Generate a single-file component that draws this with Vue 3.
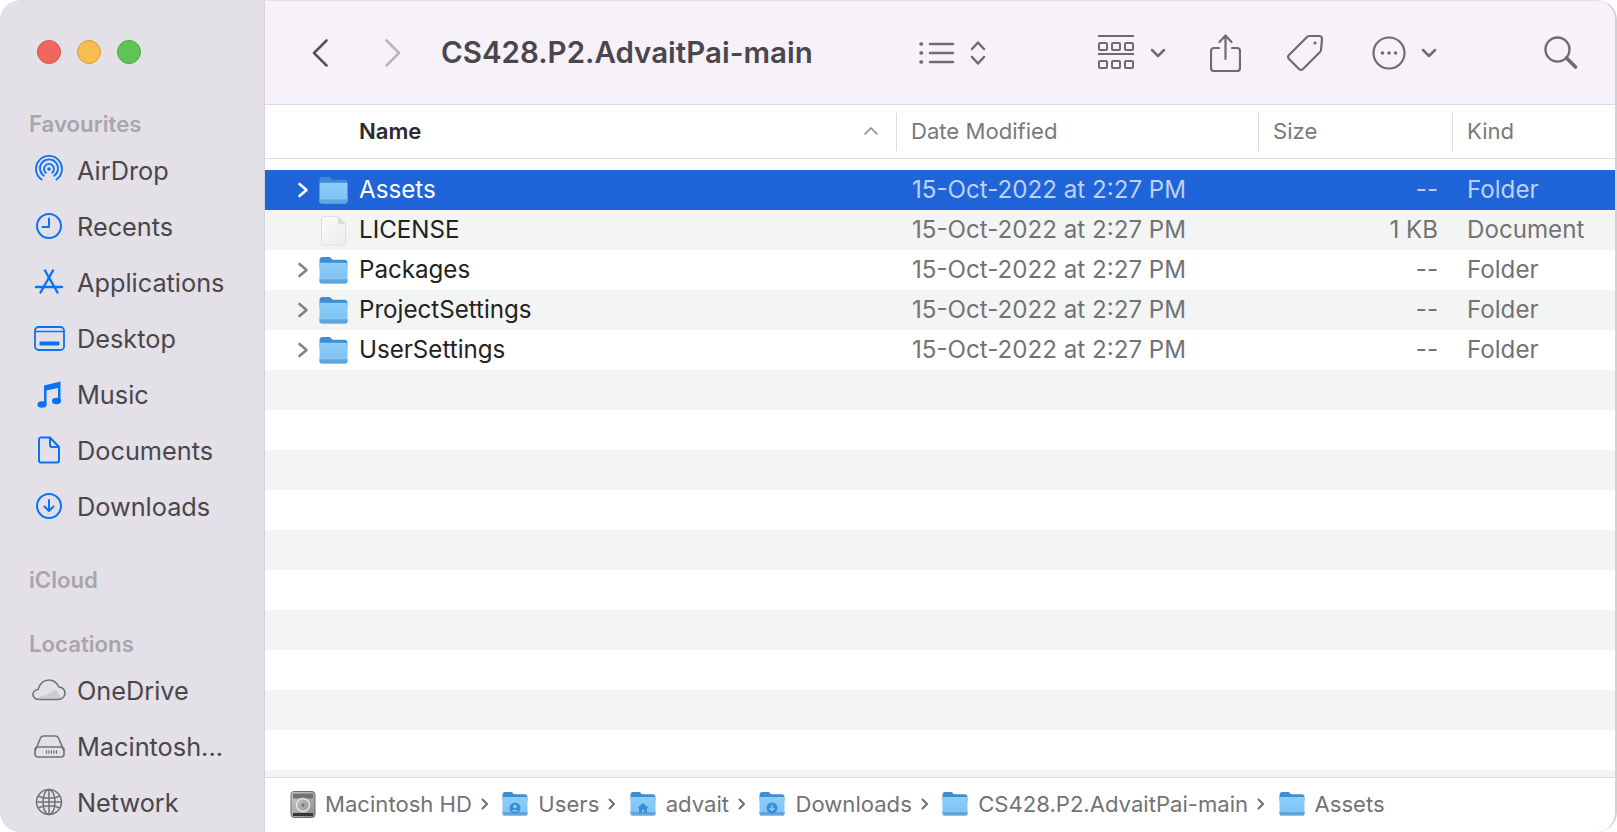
<script setup>
const favourites = [
  { name: 'AirDrop', icon: 'airdrop' },
  { name: 'Recents', icon: 'recents' },
  { name: 'Applications', icon: 'apps' },
  { name: 'Desktop', icon: 'desktop' },
  { name: 'Music', icon: 'music' },
  { name: 'Documents', icon: 'documents' },
  { name: 'Downloads', icon: 'downloads' }
]

const locations = [
  { name: 'OneDrive', icon: 'cloud' },
  { name: 'Macintosh...', icon: 'drive' },
  { name: 'Network', icon: 'globe' }
]

const date = '15-Oct-2022 at 2:27 PM'

const files = [
  { name: 'Assets', folder: true, size: '--', kind: 'Folder' },
  { name: 'LICENSE', folder: false, size: '1 KB', kind: 'Document' },
  { name: 'Packages', folder: true, size: '--', kind: 'Folder' },
  { name: 'ProjectSettings', folder: true, size: '--', kind: 'Folder' },
  { name: 'UserSettings', folder: true, size: '--', kind: 'Folder' }
]

// empty stripes under the files
const blankRows = Array.from({ length: 11 }, (_, i) => i + 5)

const crumbs = [
  { name: 'Users', badge: 'user' },
  { name: 'advait', badge: 'home' },
  { name: 'Downloads', badge: 'down' },
  { name: 'CS428.P2.AdvaitPai-main' },
  { name: 'Assets' }
]
</script>

<template>
  <div class="window">
    <svg class="defs" width="0" height="0">
      <defs>
        <linearGradient id="folderBody" x1="0" y1="0" x2="0" y2="1">
          <stop offset="0" stop-color="#8ccefa" />
          <stop offset="1" stop-color="#7cc2f4" />
        </linearGradient>
        <linearGradient id="paper" x1="0" y1="0" x2="1" y2="1">
          <stop offset="0" stop-color="#fbfbfb" />
          <stop offset="1" stop-color="#ececec" />
        </linearGradient>
        <linearGradient id="metal" x1="0" y1="0" x2="1" y2="1">
          <stop offset="0" stop-color="#c9cbcc" />
          <stop offset="1" stop-color="#8b8e90" />
        </linearGradient>
        <symbol id="folder" viewBox="0 0 28 26">
          <path d="M0.500 3a3 3 0 0 1 3-3h6.500c1.500 0 2 2.500 3.500 2.500h11a3 3 0 0 1 3 3V10H0.500z" fill="#3d8dd2" />
          <path d="M0.500 6.500a1 1 0 0 1 1-1h25a1 1 0 0 1 1 1v17a2 2 0 0 1-2 2h-23a2 2 0 0 1-2-2z" fill="url(#folderBody)" />
          <path d="M0.500 21h27v2.500a2 2 0 0 1-2 2h-23a2 2 0 0 1-2-2z" fill="#5ea6dd" />
          <path d="M0.500 21h27" stroke="#94cdf5" stroke-width="0.800" />
        </symbol>
      </defs>
    </svg>

    <aside class="sidebar">
      <div class="lights">
        <span class="light red"></span>
        <span class="light yellow"></span>
        <span class="light green"></span>
      </div>

      <div class="section-title first">Favourites</div>
      <div v-for="item in favourites" :key="item.name" class="side-item">
        <span class="side-icon blue">
          <svg v-if="item.icon === 'airdrop'" width="30" height="30" viewBox="0 0 30 30" fill="none" stroke="currentColor" stroke-width="1.800" stroke-linecap="round">
            <path d="M7.500 24.500a13 13 0 1 1 15 0" />
            <path d="M9.800 20.800a9 9 0 1 1 10.400 0" />
            <path d="M11.800 17.800a5 5 0 1 1 6.400 0" />
            <circle cx="15" cy="14" r="1.800" fill="currentColor" stroke="none" />
          </svg>
          <svg v-else-if="item.icon === 'recents'" width="28" height="28" viewBox="0 0 28 28" fill="none" stroke="currentColor" stroke-width="2" stroke-linecap="round" stroke-linejoin="round">
            <circle cx="14" cy="14" r="12" />
            <path d="M14 6.500V15H7.500" />
          </svg>
          <svg v-else-if="item.icon === 'apps'" width="30" height="26" viewBox="0 0 30 26" fill="none" stroke="currentColor" stroke-width="2.400" stroke-linecap="round">
            <path d="M11 1.500L23.500 23.500" />
            <path d="M19 1.500L6.500 23.500" />
            <path d="M2 18h26" />
          </svg>
          <svg v-else-if="item.icon === 'desktop'" width="31" height="25" viewBox="0 0 31 25" fill="none" stroke="currentColor">
            <rect x="1" y="1" width="29" height="23" rx="3.500" stroke-width="1.800" />
            <path d="M1 5.500h29" stroke-width="1.500" />
            <rect x="5.500" y="15.500" width="20" height="4" rx="1" fill="currentColor" stroke="none" />
          </svg>
          <svg v-else-if="item.icon === 'music'" width="25" height="28" viewBox="0 0 25 28" fill="currentColor">
            <path d="M7 5.500L23.500 1.500V21h-2.500V8L9.500 10.500V25H7z" />
            <ellipse cx="5" cy="24.500" rx="4.500" ry="3.300" />
            <ellipse cx="19.500" cy="21" rx="4.500" ry="3.300" />
          </svg>
          <svg v-else-if="item.icon === 'documents'" width="24" height="28" viewBox="0 0 24 28" fill="none" stroke="currentColor" stroke-width="2" stroke-linejoin="round">
            <path d="M4 1.500h9l9 9.500v13.500a2 2 0 0 1-2 2H4a2 2 0 0 1-2-2v-21a2 2 0 0 1 2-2z" />
            <path d="M13 1.500V9a2 2 0 0 0 2 2h7" />
          </svg>
          <svg v-else width="28" height="28" viewBox="0 0 28 28" fill="none" stroke="currentColor" stroke-width="2" stroke-linecap="round" stroke-linejoin="round">
            <circle cx="14" cy="14" r="12" />
            <path d="M14 8v11M9.500 14.500L14 19l4.500-4.500" />
          </svg>
        </span>
        <span>{{ item.name }}</span>
      </div>

      <div class="section-title icloud">iCloud</div>
      <div class="section-title locations">Locations</div>
      <div v-for="item in locations" :key="item.name" class="side-item">
        <span class="side-icon grey">
          <svg v-if="item.icon === 'cloud'" width="34" height="22" viewBox="0 0 34 22" fill="none" stroke="currentColor" stroke-width="1.600">
            <path d="M4 19.500c6-2 14-6 20-9l6 9.500z" fill="#cfccd1" stroke="none" />
            <path d="M8 20.500c-9 0-9-9-2-10C8 4 12 1 17 1c5 0 8 3 10 7 8 0 8 12.500-1 12.500z" />
          </svg>
          <svg v-else-if="item.icon === 'drive'" width="31" height="23" viewBox="0 0 31 23" fill="none" stroke="currentColor" stroke-width="1.600" stroke-linejoin="round">
            <path d="M1 16l5.500-13a3 3 0 0 1 2.800-2h12.400a3 3 0 0 1 2.800 2L30 16" />
            <rect x="1" y="12" width="29" height="10" rx="3" />
            <path d="M12.500 15.200v3.500M15 15.200v3.500M17.500 15.200v3.500M20 15.200v3.500M22.500 15.200v3.500" stroke-width="1.200" />
          </svg>
          <svg v-else width="28" height="28" viewBox="0 0 28 28" fill="none" stroke="currentColor" stroke-width="1.500">
            <circle cx="14" cy="14" r="12.500" />
            <ellipse cx="14" cy="14" rx="6" ry="12.500" />
            <path d="M14 1.500v25M3 8c6 3 16 3 22 0M3 20c6-3 16-3 22 0M1.500 14h25" />
          </svg>
        </span>
        <span>{{ item.name }}</span>
      </div>
    </aside>

    <main class="content">
      <header class="toolbar">
        <svg class="nav-back" width="18" height="30" viewBox="0 0 18 30" fill="none" stroke="#565358" stroke-width="2.600" stroke-linecap="round" stroke-linejoin="round">
          <path d="M15.500 2.500L3 15l12.500 12.500" />
        </svg>
        <svg class="nav-forward" width="18" height="30" viewBox="0 0 18 30" fill="none" stroke="#b9b6bb" stroke-width="2.600" stroke-linecap="round" stroke-linejoin="round">
          <path d="M2.500 2.500L15 15 2.500 27.500" />
        </svg>
        <div class="title">CS428.P2.AdvaitPai-main</div>

        <svg class="tool list" width="36" height="24" viewBox="0 0 36 24" fill="none" stroke="#6f6b71" stroke-width="2.500" stroke-linecap="round">
          <path d="M11 3h23M11 12h23M11 21h23" />
          <path d="M2 3h.5M2 12h.5M2 21h.5" stroke-width="3.500" />
        </svg>
        <svg class="tool updown" width="16" height="26" viewBox="0 0 16 26" fill="none" stroke="#6f6b71" stroke-width="2.500" stroke-linecap="round" stroke-linejoin="round">
          <path d="M2 9l6-6.500L14 9M2 17l6 6.500L14 17" />
        </svg>
        <svg class="tool grid" width="36" height="35" viewBox="0 0 36 35" fill="none" stroke="#6f6b71" stroke-width="2">
          <path d="M0 1h36M0 19h36" />
          <rect x="1" y="8" width="8" height="7" rx="1" />
          <rect x="14" y="8" width="8" height="7" rx="1" />
          <rect x="27" y="8" width="8" height="7" rx="1" />
          <rect x="1" y="26" width="8" height="7" rx="1" />
          <rect x="14" y="26" width="8" height="7" rx="1" />
          <rect x="27" y="26" width="8" height="7" rx="1" />
        </svg>
        <svg class="tool caret-grid" width="16" height="10" viewBox="0 0 16 10" fill="none" stroke="#6f6b71" stroke-width="2.500" stroke-linecap="round" stroke-linejoin="round">
          <path d="M2 2l6 6 6-6" />
        </svg>
        <svg class="tool share" width="31" height="38" viewBox="0 0 31 38" fill="none" stroke="#6f6b71" stroke-width="2.200" stroke-linecap="round" stroke-linejoin="round">
          <path d="M9 14H4a3 3 0 0 0-3 3v17a3 3 0 0 0 3 3h23a3 3 0 0 0 3-3V17a3 3 0 0 0-3-3h-5" />
          <path d="M15.500 25V2M9.500 8l6-6.500 6 6.500" />
        </svg>
        <svg class="tool tag" width="38" height="38" viewBox="0 0 38 38" fill="none" stroke="#6f6b71" stroke-width="2.200" stroke-linejoin="round">
          <path d="M23 2h10a3 3 0 0 1 3 3l-1 11a3 3 0 0 1-1 2L17 35a3 3 0 0 1-4 0L3 25a3 3 0 0 1 0-4L21 3a3 3 0 0 1 2-1z" />
          <circle cx="29" cy="9" r="1.600" fill="#6f6b71" stroke="none" />
        </svg>
        <svg class="tool more" width="34" height="34" viewBox="0 0 34 34" fill="none" stroke="#6f6b71" stroke-width="2.200">
          <circle cx="17" cy="17" r="15.500" />
          <g fill="#6f6b71" stroke="none">
            <circle cx="10.500" cy="17" r="1.800" />
            <circle cx="17" cy="17" r="1.800" />
            <circle cx="23.500" cy="17" r="1.800" />
          </g>
        </svg>
        <svg class="tool caret-more" width="16" height="10" viewBox="0 0 16 10" fill="none" stroke="#6f6b71" stroke-width="2.500" stroke-linecap="round" stroke-linejoin="round">
          <path d="M2 2l6 6 6-6" />
        </svg>
        <svg class="tool search" width="34" height="33" viewBox="0 0 34 33" fill="none" stroke="#6f6b71" stroke-linecap="round">
          <circle cx="13.500" cy="13.500" r="12" stroke-width="2.400" />
          <path d="M22.500 22l9 9" stroke-width="3.600" />
        </svg>
      </header>

      <div class="columns">
        <div class="col col-name">
          <span class="name-label">Name</span>
          <svg class="sort" width="16" height="10" viewBox="0 0 16 10" fill="none" stroke="#8a888b" stroke-width="1.600" stroke-linecap="round" stroke-linejoin="round">
            <path d="M2 8l6-6 6 6" />
          </svg>
        </div>
        <div class="col col-date">Date Modified</div>
        <div class="col col-size">Size</div>
        <div class="col col-kind">Kind</div>
      </div>

      <div class="rows">
        <div
          v-for="(file, i) in files"
          :key="file.name"
          class="row"
          :class="{ selected: i === 0, odd: i % 2 === 1 }"
        >
          <div class="cell-name">
            <span class="arrow">
              <svg v-if="file.folder" width="12" height="16" viewBox="0 0 12 16" fill="none" stroke="currentColor" stroke-width="2.600" stroke-linecap="round" stroke-linejoin="round">
                <path d="M2.500 2l7 6-7 6" />
              </svg>
            </span>
            <svg v-if="file.folder" class="file-icon" width="29" height="27"><use href="#folder" /></svg>
            <svg v-else class="file-icon" width="29" height="31" viewBox="0 0 29 31">
              <path d="M3.500 1.500h15.500l7.500 7.500v19.500a1.500 1.500 0 0 1-1.500 1.500H4a1.500 1.500 0 0 1-1.500-1.500V2.500z" fill="url(#paper)" stroke="#dedede" />
              <path d="M19 1.500V9h7.500z" fill="#dcdcdc" />
            </svg>
            <span class="name-text">{{ file.name }}</span>
          </div>
          <div class="cell-date">{{ date }}</div>
          <div class="cell-size">{{ file.size }}</div>
          <div class="cell-kind">{{ file.kind }}</div>
        </div>
        <div v-for="n in blankRows" :key="n" class="row" :class="{ odd: n % 2 === 1 }"></div>
      </div>

      <footer class="pathbar">
        <svg class="crumb-icon" width="26" height="27" viewBox="0 0 26 27">
          <rect x="1" y="0.500" width="24" height="26" rx="3" fill="url(#metal)" stroke="#6b6e70" />
          <rect x="3" y="2.500" width="20" height="5" fill="#6f7274" />
          <circle cx="13" cy="14" r="6.500" fill="none" stroke="#dfe1e2" stroke-width="1.500" />
          <circle cx="13" cy="14" r="1.500" fill="#6f7274" />
          <rect x="3" y="22" width="20" height="3" fill="#34363a" />
        </svg>
        <span class="crumb-text">Macintosh HD</span>
        <template v-for="crumb in crumbs" :key="crumb.name + crumb.badge">
          <svg class="crumb-sep" width="8" height="12" viewBox="0 0 8 12" fill="none" stroke="#6e6c6f" stroke-width="2" stroke-linecap="round" stroke-linejoin="round">
            <path d="M1.500 1.500L6 6l-4.500 4.500" />
          </svg>
          <span class="crumb-folder">
            <svg width="26" height="24"><use href="#folder" /></svg>
            <svg v-if="crumb.badge" class="crumb-badge" width="12" height="12" viewBox="0 0 12 12" fill="#3b8dd3">
              <template v-if="crumb.badge === 'user'">
                <circle cx="6" cy="6" r="5.500" />
                <circle cx="6" cy="4.500" r="1.800" fill="#8fd0fb" />
                <path d="M2.800 9.500c1-2.500 5.400-2.500 6.400 0z" fill="#8fd0fb" />
              </template>
              <path v-else-if="crumb.badge === 'home'" d="M6 1L0.500 6H2v5h3V7.500h2V11h3V6h1.500z" />
              <template v-else>
                <circle cx="6" cy="6" r="5.500" />
                <path d="M6 2.500v6M3.500 6L6 8.500 8.500 6" fill="none" stroke="#8fd0fb" stroke-width="1.200" />
              </template>
            </svg>
          </span>
          <span class="crumb-text">{{ crumb.name }}</span>
        </template>
      </footer>
    </main>
  </div>
</template>

<style scoped>
.window {
  display: flex;
  width: 1617px;
  height: 832px;
  box-sizing: border-box;
  border-style: solid;
  border-width: 1px 2px 0 0;
  border-color: #e2e0e3 #d2d0d3 #fff #fff;
  border-radius: 20px;
  overflow: hidden;
  background: #fff;
  font-family: Inter, "Liberation Sans", sans-serif;
}

.defs {
  position: absolute;
}

/* sidebar */
.sidebar {
  width: 264px;
  flex-shrink: 0;
  background: #e4e0e7;
  border-right: 1px solid #d6d3d8;
  color: #49474b;
  font-size: 25.300px;
}

.lights {
  display: flex;
  gap: 16px;
  padding: 39px 0 0 37px;
}

.light {
  width: 24px;
  height: 24px;
  box-sizing: border-box;
  border-radius: 50%;
  border: 1px solid transparent;
}

.red {
  background: #f1675f;
  border-color: #d6524b;
}

.yellow {
  background: #f7bd4f;
  border-color: #dd9f36;
}

.green {
  background: #5ec454;
  border-color: #4aa842;
}

.section-title {
  padding-left: 29px;
  font-size: 22.200px;
  font-weight: 600;
  color: #a9a5ac;
  line-height: 26px;
}

.first {
  margin-top: 47px;
  margin-bottom: 5px;
}

.icloud {
  margin-top: 33px;
}

.locations {
  margin-top: 38px;
  margin-bottom: 5px;
}

.side-item {
  display: flex;
  align-items: center;
  height: 56px;
}

.side-icon {
  display: flex;
  align-items: center;
  justify-content: center;
  width: 40px;
  margin: 0 8px 0 29px;
}

.blue {
  color: #0a72f5;
}

.grey {
  color: #747176;
}

/* toolbar */
.content {
  flex: 1;
  min-width: 0;
  display: flex;
  flex-direction: column;
}

.toolbar {
  display: flex;
  align-items: center;
  flex-shrink: 0;
  height: 104px;
  box-sizing: border-box;
  background: #f7f2f9;
  border-bottom: 1px solid #dbd9dc;
}

.nav-back {
  margin-left: 46px;
}

.nav-forward {
  margin-left: 55px;
}

.title {
  margin-left: 39px;
  width: 478px;
  padding-bottom: 2px;
  font-size: 29.500px;
  font-weight: 600;
  color: #4a474c;
  white-space: nowrap;
}

.tool {
  flex-shrink: 0;
}

.updown {
  margin-left: 15px;
}

.grid {
  margin-left: 112px;
}

.caret-grid {
  margin-left: 16px;
}

.share {
  margin-left: 44px;
}

.tag {
  margin-left: 45px;
}

.more {
  margin-left: 48px;
}

.caret-more {
  margin-left: 15px;
}

.search {
  margin-left: 107px;
}

/* columns */
.columns {
  display: flex;
  flex-shrink: 0;
  height: 54px;
  box-sizing: border-box;
  align-items: center;
  border-bottom: 1px solid #dddcdd;
  font-size: 22.100px;
  color: #7a787a;
}

.col {
  display: flex;
  align-items: center;
  height: 38px;
  box-sizing: border-box;
  padding-left: 14px;
  padding-bottom: 2px;
}

.col-name {
  width: 631px;
  padding-left: 94px;
  justify-content: space-between;
  padding-right: 17px;
  font-weight: 600;
  color: #2b2a2c;
}

.col-date,
.col-size,
.col-kind {
  border-left: 1px solid #dddcdd;
}

.col-date {
  width: 362px;
}

.col-size {
  width: 194px;
}

/* rows */
.rows {
  flex: 1;
  min-height: 0;
  overflow: hidden;
  padding-top: 11px;
  font-size: 24.150px;
  color: #222;
}

.row {
  display: flex;
  align-items: center;
  height: 40px;
  color: #737274;
}

.row.odd {
  background: #f3f5f4;
}

.row.selected {
  background: #1f65d9;
  color: #bdd2f6;
}

.cell-name {
  display: flex;
  align-items: center;
  width: 647px;
  color: #222;
}

.name-text,
.cell-date,
.cell-size,
.cell-kind {
  margin-bottom: 2px;
}

.arrow {
  display: flex;
  width: 16px;
  margin-left: 32px;
  margin-right: 6px;
  color: #838184;
}

.file-icon {
  flex-shrink: 0;
  margin-right: 11px;
}

.selected .cell-name,
.selected .arrow {
  color: #fff;
}

.cell-date {
  width: 361px;
}

.cell-size {
  width: 165px;
  text-align: right;
}

.cell-kind {
  margin-left: 29px;
}

/* path bar */
.pathbar {
  display: flex;
  align-items: center;
  flex-shrink: 0;
  height: 55px;
  box-sizing: border-box;
  padding-left: 25px;
  padding-bottom: 2px;
  border-top: 1px solid #dddcdd;
  font-size: 22.100px;
  color: #737274;
}

.crumb-icon {
  margin-right: 9px;
}

.crumb-sep {
  flex-shrink: 0;
  margin: 0 13.400px 0 9px;
}

.crumb-folder {
  position: relative;
  display: flex;
  margin-right: 10px;
}

.crumb-badge {
  position: absolute;
  left: 7px;
  top: 10px;
}

.crumb-text {
  white-space: nowrap;
}
</style>

<style>
html,
body {
  margin: 0;
  background: #fff;
}
</style>
